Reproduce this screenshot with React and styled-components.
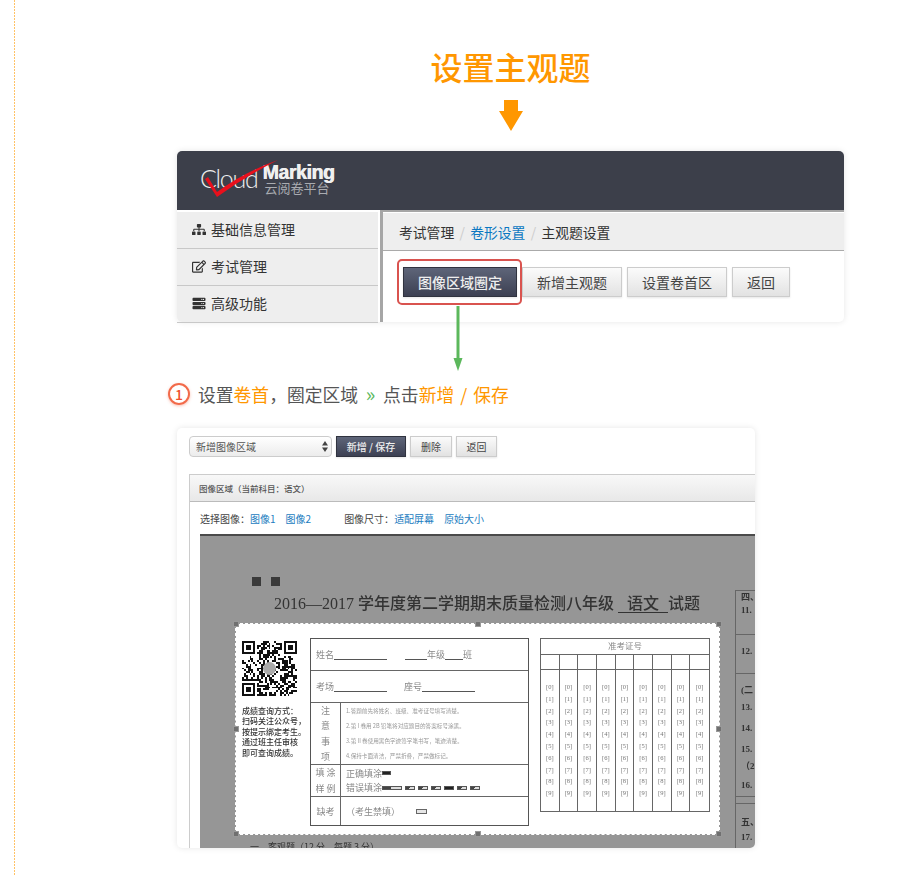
import styled, { createGlobalStyle } from 'styled-components'
import { FaSitemap, FaRegEdit, FaServer } from 'react-icons/fa'

const FONT = '"Noto Sans CJK SC", "Noto Sans", sans-serif'

const GlobalStyle = createGlobalStyle`
  html, body { margin: 0; padding: 0; background: #fff; }
  body { font-family: ${FONT}; color: #444; }
  * { box-sizing: border-box; }
`

const Page = styled.div`
  display: flex;
  width: 914px;
  height: 875px;
  overflow: hidden;
`

const Rail = styled.div`
  flex: none;
  width: 1px;
  margin-left: 14px;
  background: repeating-linear-gradient(to bottom, #ffc266 0 2px, transparent 2px 3px);
`

const Column = styled.main`
  display: flex;
  flex-direction: column;
  align-items: center;
  width: 667px;
  margin-left: 162px;
  padding-top: 46px;
`

const Title = styled.h1`
  margin: 0;
  font-size: 32px;
  line-height: 40px;
  font-weight: 500;
  color: #ff9700;
`

const DownArrow = styled.svg`
  display: block;
  margin-top: 14px;
`

/* top card */
const Card = styled.section`
  position: relative;
  width: 667px;
  height: 171px;
  margin-top: 20px;
  background: #fff;
  border-radius: 5px;
  box-shadow: 0 0 6px rgba(0,0,0,0.1);
`

const Header = styled.header`
  display: flex;
  align-items: center;
  height: 59px;
  padding-left: 23px;
  background: #3c3f4a;
  border-radius: 5px 5px 0 0;
`

const Logo = styled.div`
  position: relative;
  display: flex;
  width: 140px;
  height: 59px;
`

const LogoCloud = styled.span`
  margin-top: 9px;
  font-family: Lato, "Liberation Sans", sans-serif;
  font-weight: 300;
  font-size: 25px;
  line-height: 36px;
  letter-spacing: -1.3px;
  color: #eee;
`

const LogoRight = styled.div`
  display: flex;
  flex-direction: column;
  margin: 10px 0 0 5px;
`

const LogoMark = styled.span`
  font-family: "Liberation Sans", sans-serif;
  font-weight: 700;
  font-size: 19.5px;
  line-height: 22px;
  letter-spacing: -0.4px;
  color: #f0f0f0;
  text-shadow: 0.6px 0 0 #f0f0f0;
`

const LogoSub = styled.span`
  margin: -2px 0 0 2px;
  font-size: 13px;
  line-height: 14px;
  color: #a9abb0;
`

const LogoTick = styled.svg`
  position: absolute;
  left: 0;
  top: 0;
`

const Body = styled.div`
  display: flex;
  height: 112px;
`

const Sidebar = styled.nav`
  flex: none;
  width: 201px;
  margin-top: 2px;
  background: #eee;
  border-radius: 0 0 0 5px;
`

const SideItem = styled.div`
  display: flex;
  align-items: center;
  gap: 5px;
  height: 37px;
  padding: 0 0 2px 15px;
  font-size: 14px;
  color: #333;
  border-bottom: 1px solid #c8c8c8;

  svg { width: 14px; height: 13px; color: #333; }
`

const Content = styled.div`
  flex: 1;
  margin-left: 2px;
  border-left: 3px solid #a6a6a6;
  border-top: 2px solid #a6a6a6;
`

const Crumbs = styled.div`
  display: flex;
  align-items: center;
  height: 39px;
  padding: 0 0 0 16px;
  font-size: 13.8px;
  color: #333;
  background: #eee;
  border-top: 1px solid #fff;
  border-bottom: 1px solid #aaa;
`

const CrumbSep = styled.span`
  width: 16px;
  text-align: center;
  color: #ccc;
`

const CrumbLink = styled.a`
  color: #0b78c2;
`

const ButtonRow = styled.div`
  display: flex;
  gap: 5px;
  padding: 16px 0 0 20px;
`

const Button = styled.button`
  width: ${p => p.$w}px;
  height: ${p => p.$h || 30}px;
  padding: 0;
  font-family: ${FONT};
  font-size: ${p => p.$size || 14}px;
  color: #444;
  background: linear-gradient(#fbfbfb, #e2e2e2);
  border: 1px solid #ccc;
  box-shadow: 0 1px 2px rgba(0,0,0,0.1);
`

const DarkButton = styled(Button)`
  position: relative;
  font-weight: 500;
  color: #eee;
  background: linear-gradient(#5e6579, #3c4052);
  border: 1px solid #30333f;

  ${p => p.$marked && `
    &::after {
      content: '';
      position: absolute;
      inset: -9px -6px -9px -7px;
      border: 2px solid #d9534f;
      border-radius: 5px;
    }
  `}
`

const GreenArrow = styled.svg`
  position: absolute;
  left: 273px;
  top: 155px;
`

/* step line */
const Step = styled.div`
  display: flex;
  align-items: center;
  align-self: flex-start;
  height: 24px;
  margin: 60px 0 0 -9px;
  font-size: 17.8px;
  word-spacing: 2px;
  color: #555;
  white-space: pre;
`

const StepNo = styled.span`
  display: flex;
  align-items: center;
  justify-content: center;
  width: 22px;
  height: 22px;
  margin-right: 8px;
  font-size: 14px;
  font-weight: 500;
  color: #f0502c;
  border: 2px solid #f26a4a;
  border-radius: 50%;
  box-shadow: 0 1px 3px rgba(240,80,44,0.35);
`

const Hi = styled.span`
  color: #ff9700;
`

const Chevron = styled.span`
  width: 25px;
  font-size: 20px;
  line-height: 20px;
  text-align: center;
  color: #5cb85c;
`

/* bottom panel */
const Panel = styled.section`
  align-self: flex-start;
  width: 578px;
  height: 420px;
  margin-top: 22px;
  padding: 8px 0 0 12px;
  overflow: hidden;
  background: #fff;
  border-radius: 5px;
  box-shadow: 0 0 6px rgba(0,0,0,0.1);
`

const Toolbar = styled.div`
  display: flex;
  gap: 4px;
`

const SelectBox = styled.div`
  display: flex;
  align-items: center;
  justify-content: space-between;
  width: 143px;
  height: 21px;
  padding: 0 3px 0 6px;
  font-size: 10px;
  color: #555;
  background: linear-gradient(#fff, #ececec);
  border: 1px solid #ccc;
  border-radius: 4px;
`

const Region = styled.div`
  margin-top: 17px;
  border-left: 1px solid #ccc;
`

const RegionHead = styled.div`
  display: flex;
  align-items: center;
  height: 28px;
  padding-left: 9px;
  font-size: 8.5px;
  font-weight: 500;
  color: #555;
  background: linear-gradient(#f8f8f8, #e8e8e8);
  border-top: 1px solid #ccc;
  border-bottom: 1px solid #bbb;
`

const ImageBar = styled.div`
  display: flex;
  align-items: center;
  height: 32px;
  padding-left: 10px;
  font-size: 10px;
  color: #444;
`

const BarLink = styled.a`
  margin-left: ${p => p.$gap || 0}px;
  color: #1b7cc0;
`

const BarLabel = styled.span`
  margin-left: ${p => p.$gap || 0}px;
`

const Scan = styled.div`
  display: flex;
  width: 555px;
  height: 314px;
  margin-left: 10px;
  overflow: hidden;
  color: #333;
  background: #969696;
  border-top: 2px solid #4a4a4a;
  filter: blur(0.35px);
`

const ScanMain = styled.div`
  flex: none;
  width: 535px;
  padding-top: 41px;
`

const Marks = styled.div`
  display: flex;
  gap: 10px;
  padding-left: 52px;
`

const Mark = styled.i`
  width: 9px;
  height: 9px;
  background: #3a3a3a;
`

const ScanTitle = styled.div`
  height: 37px;
  padding: 9px 0 0 74px;
  font-family: "Liberation Serif", "Noto Sans CJK SC", serif;
  font-size: 16px;
  line-height: 18px;
  font-weight: 500;
  white-space: pre;
`

const Under = styled.span`
  margin-left: 4px;
  padding: 0 9px;
  border-bottom: 1px solid #333;
`

const Selection = styled.div`
  position: relative;
  display: flex;
  width: 485px;
  height: 212px;
  margin-left: 35px;
  padding: 14px 0 0 6px;
  font-family: "Noto Sans CJK SC", sans-serif;
  background: #fff;
  background-clip: padding-box;
  border: 1px dashed #fff;
`

const Handle = styled.i`
  position: absolute;
  width: 6px;
  height: 6px;
  background: #707070;
  border: 1px solid #999;
  left: ${p => p.$x}%;
  top: ${p => p.$y}%;
  transform: translate(-50%, -50%);
`

const Notice = styled.div`
  flex: none;
  width: 68px;
  padding-top: 3px;
`

const NoticeText = styled.p`
  margin: 5px 0 0 0;
  font-size: 8px;
  line-height: 10.4px;
  font-weight: 500;
  color: #333;
  white-space: nowrap;
`

const InfoTable = styled.div`
  flex: none;
  width: 219px;
  height: 188px;
  font-size: 9px;
  color: #888;
  border: 1px solid #555;
`

const InfoRow = styled.div`
  display: flex;
  align-items: ${p => (p.$stretch ? 'stretch' : 'center')};
  height: ${p => p.$h}px;
  ${p => p.$pad && 'padding-left: 5px;'}
  border-bottom: ${p => (p.$last ? 'none' : '1px solid #666')};
`

const Blank = styled.span`
  display: inline-block;
  width: ${p => p.$w}px;
  height: 10px;
  margin-left: ${p => p.$gap || 0}px;
  border-bottom: 1px solid #555;
`

const RowHead = styled.div`
  display: flex;
  flex-direction: column;
  align-items: center;
  justify-content: space-around;
  flex: none;
  width: 30px;
  border-right: 1px solid #666;
  line-height: 13px;
`

const RowBody = styled.div`
  display: flex;
  flex-direction: column;
  justify-content: space-around;
  flex: 1;
  padding: 1px 0 1px 5px;
  font-size: ${p => p.$size || 9}px;
  color: ${p => p.$color || '#888'};
  white-space: nowrap;
`

const FillLine = styled.div`
  display: flex;
  align-items: center;
`

const Bubble = styled.i`
  display: inline-block;
  width: ${p => p.$w || 10}px;
  height: 4px;
  margin-right: 3px;
  background: ${p => (p.$on ? '#222' : 'linear-gradient(100deg, #444 0 45%, #ddd 45% 100%)')};
  border: 1px solid #555;
`

const EmptyBubble = styled.i`
  display: inline-block;
  width: 11px;
  height: 5px;
  margin-left: 16px;
  border: 1px solid #666;
  background: #e6e6e6;
`

const NumberTable = styled.div`
  flex: none;
  width: 170px;
  height: 174px;
  margin-left: 11px;
  border: 1px solid #666;
  display: grid;
  grid-template-columns: repeat(9, 1fr);
  grid-template-rows: 16px 15px 1fr;
`

const NumberHead = styled.div`
  grid-column: 1 / -1;
  font-size: 8.5px;
  line-height: 13px;
  text-align: center;
  color: #888;
  border-bottom: 1px solid #666;
`

const NumberCell = styled.div`
  border-right: ${p => (p.$last ? 'none' : '1px solid #666')};
  ${p => p.$top && 'border-bottom: 1px solid #666;'}
`

const Digits = styled(NumberCell)`
  display: flex;
  flex-direction: column;
  align-items: center;
  padding-top: 11px;
  font-family: "Liberation Serif", serif;
  font-size: 6.5px;
  line-height: 11.8px;
  color: #777;
`

const BelowLine = styled.div`
  padding: 6px 0 0 50px;
  font-size: 9px;
  line-height: 12px;
  color: #333;
  white-space: pre;
`

const Strip = styled.div`
  flex: none;
  width: 60px;
  margin-top: 54px;
  border-left: 1px solid #666;
  border-top: 1px solid #666;
  font-family: "Liberation Serif", "Noto Sans CJK SC", serif;
  font-size: 9px;
  font-weight: 700;
  color: #333;
`

const StripRow = styled.div`
  height: ${p => p.$h}px;
  padding: ${p => p.$top || 0}px 0 0 5px;
  line-height: 13px;
  ${p => p.$rule && `border-bottom: ${p.$rule} #666;`}
`

const handles = [
  [0, 0], [50, 0], [100, 0],
  [0, 50], [100, 50],
  [0, 100], [50, 100], [100, 100],
]

// fake QR: three finder squares plus seeded noise
function qrCells() {
  const n = 29
  const cells = []
  let seed = 20170
  const finder = (x, y) => x >= 0 && x <= 6 && y >= 0 && y <= 6 &&
    (x === 0 || x === 6 || y === 0 || y === 6 || (x >= 2 && x <= 4 && y >= 2 && y <= 4))
  for (let y = 0; y < n; y++) {
    for (let x = 0; x < n; x++) {
      seed = (seed * 1103515245 + 12345) & 0x7fffffff
      let on = ((seed >> 16) & 7) > 3
      const tl = x < 8 && y < 8
      const tr = x >= n - 8 && y < 8
      const bl = x < 8 && y >= n - 8
      if (tl) on = finder(x, y)
      if (tr) on = finder(x - (n - 7), y)
      if (bl) on = finder(x, y - (n - 7))
      if (on) cells.push([x, y])
    }
  }
  return cells
}

function Qr() {
  return (
    <svg width="55" height="55" viewBox="0 0 29 29" shapeRendering="crispEdges">
      {qrCells().map(([x, y]) => <rect key={x + '-' + y} x={x} y={y} width="1" height="1" fill="#111" />)}
      <circle cx="14.5" cy="14.5" r="3.4" fill="#aaa" shapeRendering="auto" />
    </svg>
  )
}

function App() {
  const notes = [
    '1.答题前先将姓名、班级、准考证号填写清楚。',
    '2.第 I 卷用 2B 铅笔将对应题目的答案标号涂黑。',
    '3.第 II 卷使用黑色字迹签字笔书写，笔迹清楚。',
    '4.保持卡面清洁，严禁折叠，严禁做标记。',
  ]
  const columns = Array.from({ length: 9 }, (_, i) => i)
  const digits = Array.from({ length: 10 }, (_, i) => i)

  return (
    <Page>
      <GlobalStyle />
      <Rail />
      <Column>
        <Title>设置主观题</Title>
        <DownArrow width="24" height="31" viewBox="0 0 24 31">
          <path d="M5 0h14v11h5L12 31 0 11h5z" fill="#ff9700" />
        </DownArrow>

        <Card>
          <Header>
            <Logo>
              <LogoCloud>Cloud</LogoCloud>
              <LogoRight>
                <LogoMark>Marking</LogoMark>
                <LogoSub>云阅卷平台</LogoSub>
              </LogoRight>
              <LogoTick width="100" height="59" viewBox="0 0 100 59">
                <path d="M5 28L8 26 17 41Q44 21 78 9 46 25 17 46z" fill="#e8101c" />
              </LogoTick>
            </Logo>
          </Header>
          <Body>
            <Sidebar>
              <SideItem><FaSitemap />基础信息管理</SideItem>
              <SideItem><FaRegEdit />考试管理</SideItem>
              <SideItem><FaServer />高级功能</SideItem>
            </Sidebar>
            <Content>
              <Crumbs>
                考试管理<CrumbSep>/</CrumbSep><CrumbLink>卷形设置</CrumbLink><CrumbSep>/</CrumbSep>主观题设置
              </Crumbs>
              <ButtonRow>
                <DarkButton $w={114} $marked>图像区域圈定</DarkButton>
                <Button $w={100}>新增主观题</Button>
                <Button $w={100}>设置卷首区</Button>
                <Button $w={58}>返回</Button>
              </ButtonRow>
            </Content>
          </Body>
          <GreenArrow width="16" height="65" viewBox="0 0 16 65">
            <path d="M8 0v54" stroke="#5cb85c" strokeWidth="3" />
            <path d="M3.5 52h9L8 65z" fill="#5cb85c" />
          </GreenArrow>
        </Card>

        <Step>
          <StepNo>1</StepNo>设置<Hi>卷首</Hi>，圈定区域<Chevron>»</Chevron>点击<Hi>新增 / 保存</Hi>
        </Step>

        <Panel>
          <Toolbar>
            <SelectBox>
              新增图像区域
              <svg width="6" height="11" viewBox="0 0 6 11">
                <path d="M3 0l3 4.4H0zM3 11L0 6.6h6z" fill="#444" />
              </svg>
            </SelectBox>
            <DarkButton $w={70} $h={21} $size={10}>新增 / 保存</DarkButton>
            <Button $w={42} $h={21} $size={10}>删除</Button>
            <Button $w={41} $h={21} $size={10}>返回</Button>
          </Toolbar>
          <Region>
            <RegionHead>图像区域（当前科目：语文）</RegionHead>
            <ImageBar>
              <BarLabel>选择图像：</BarLabel>
              <BarLink>图像1</BarLink>
              <BarLink $gap={10}>图像2</BarLink>
              <BarLabel $gap={33}>图像尺寸：</BarLabel>
              <BarLink>适配屏幕</BarLink>
              <BarLink $gap={10}>原始大小</BarLink>
            </ImageBar>
            <Scan>
              <ScanMain>
                <Marks><Mark /><Mark /></Marks>
                <ScanTitle>2016—2017 学年度第二学期期末质量检测八年级<Under>语文</Under>试题</ScanTitle>
                <Selection>
                  {handles.map(([x, y]) => <Handle key={x + '-' + y} $x={x} $y={y} />)}
                  <Notice>
                    <Qr />
                    <NoticeText>
                      成绩查询方式：<br />扫码关注公众号，<br />按提示绑定考生。<br />通过班主任审核<br />即可查询成绩。
                    </NoticeText>
                  </Notice>
                  <InfoTable>
                    <InfoRow $h={32} $pad>姓名<Blank $w={53} /><Blank $w={22} $gap={18} />年级<Blank $w={18} />班</InfoRow>
                    <InfoRow $h={32} $pad>考场<Blank $w={53} /><Blank $w={0} $gap={17} />座号<Blank $w={53} /></InfoRow>
                    <InfoRow $h={62} $stretch>
                      <RowHead><span>注</span><span>意</span><span>事</span><span>项</span></RowHead>
                      <RowBody $size={5.6} $color="#999">
                        {notes.map(n => <span key={n}>{n}</span>)}
                      </RowBody>
                    </InfoRow>
                    <InfoRow $h={32} $stretch>
                      <RowHead><span>填 涂</span><span>样 例</span></RowHead>
                      <RowBody>
                        <FillLine>正确填涂<Bubble $w={9} $on /></FillLine>
                        <FillLine>错误填涂<Bubble $w={20} /><Bubble /><Bubble /><Bubble /><Bubble $on /><Bubble /><Bubble /></FillLine>
                      </RowBody>
                    </InfoRow>
                    <InfoRow $h={28} $stretch $last>
                      <RowHead><span>缺考</span></RowHead>
                      <RowBody><FillLine>（考生禁填）<EmptyBubble /></FillLine></RowBody>
                    </InfoRow>
                  </InfoTable>
                  <NumberTable>
                    <NumberHead>准考证号</NumberHead>
                    {columns.map(c => <NumberCell key={c} $top $last={c === 8} />)}
                    {columns.map(c => (
                      <Digits key={c} $last={c === 8}>
                        {digits.map(d => <span key={d}>[{d}]</span>)}
                      </Digits>
                    ))}
                  </NumberTable>
                </Selection>
                <BelowLine>一、客观题（12 分，每题 3 分）</BelowLine>
              </ScanMain>
              <Strip>
                <StripRow $h={44} $rule="1px solid">四、<br />11.</StripRow>
                <StripRow $h={39} $rule="1px solid" $top={10}>12.</StripRow>
                <StripRow $h={24} $top={10}>(二</StripRow>
                <StripRow $h={21} $top={3}>13.</StripRow>
                <StripRow $h={21} $top={3}>14.</StripRow>
                <StripRow $h={20} $top={3}>15.</StripRow>
                <StripRow $h={19}>（2</StripRow>
                <StripRow $h={18} $rule="1px solid">16.</StripRow>
                <StripRow $h={7} $rule="1px solid" />
                <StripRow $h={27} $top={12}>五、</StripRow>
                <StripRow $h={12}>17.</StripRow>
              </Strip>
            </Scan>
          </Region>
        </Panel>
      </Column>
    </Page>
  )
}

export default App
